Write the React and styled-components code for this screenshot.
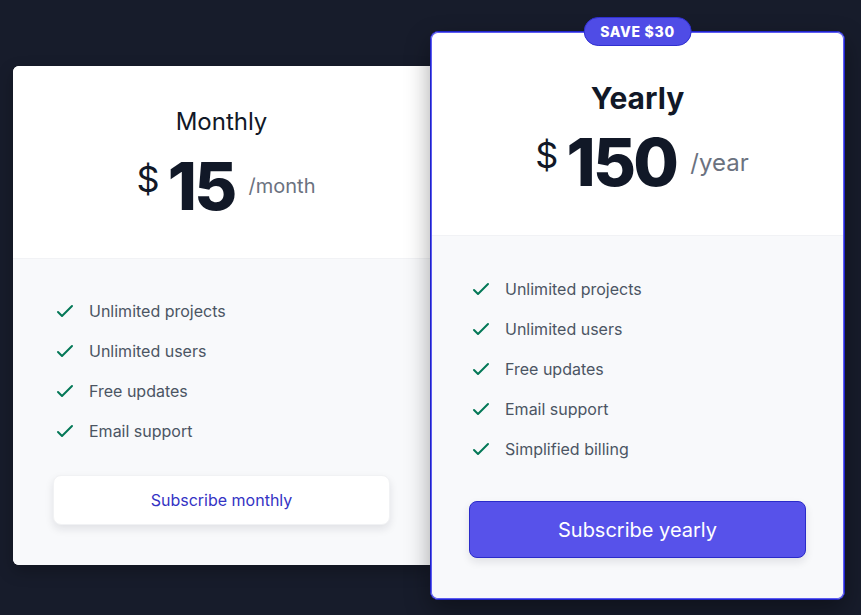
import React from "react";
import styled, { createGlobalStyle } from "styled-components";

const Global = createGlobalStyle`
  html, body { margin: 0; padding: 0; background: #171c2b; }
  body { font-family: Inter, "Noto Sans", sans-serif; -webkit-font-smoothing: antialiased; }
  * { box-sizing: border-box; }
`;

const Page = styled.div`
  width: 861px;
  height: 615px;
  display: flex;
  align-items: center;
  padding: 16px 0 0 13px;
`;

const Card = styled.div`
  position: relative;
  display: flex;
  flex-direction: column;
  width: ${(p) => (p.$featured ? "415px" : "417px")};
  background: #ffffff;
  border-radius: ${(p) => (p.$featured ? "8px" : "6px 0 0 6px")};
  border: ${(p) => (p.$featured ? "1px solid #1f23c8" : "none")};
  box-shadow: ${(p) =>
    p.$featured
      ? "inset 0 0 0 1px #5d5cf0, 0 10px 25px rgba(0,0,0,0.35)"
      : "0 6px 16px rgba(0,0,0,0.25)"};
  z-index: ${(p) => (p.$featured ? 2 : 1)};
`;

const Header = styled.div`
  display: flex;
  flex-direction: column;
  align-items: center;
  background: #ffffff;
  border-radius: inherit;
  border-bottom-left-radius: 0;
  border-bottom-right-radius: 0;
  padding: ${(p) => (p.$featured ? "45px 37px 37px" : "40px 40px 40px")};
  border-bottom: 1px solid #f1f2f5;
  margin: ${(p) => (p.$featured ? "1px 1px 0" : "0")};
`;

const Badge = styled.span`
  position: absolute;
  top: -15px;
  left: 50%;
  transform: translateX(-50%);
  height: 29px;
  padding: 0 16px;
  display: inline-flex;
  align-items: center;
  border-radius: 999px;
  background: #4f4ce6;
  border: 1px solid #2f2fd0;
  color: #ffffff;
  font-size: 14px;
  font-weight: 800;
  letter-spacing: 0.05em;
  text-transform: uppercase;
`;

const Title = styled.h3`
  margin: 0;
  color: #111827;
  font-size: ${(p) => (p.$featured ? "30px" : "24px")};
  line-height: ${(p) => (p.$featured ? "40px" : "32px")};
  font-weight: ${(p) => (p.$featured ? 700 : 400)};
`;

const PriceRow = styled.div`
  margin-top: ${(p) => (p.$featured ? "8px" : "16px")};
  display: flex;
  align-items: center;
  justify-content: center;
  height: ${(p) => (p.$featured ? "72px" : "64px")};
`;

const Amount = styled.span`
  display: flex;
  align-items: flex-start;
  padding: 0 14px 0 9px;
  color: #111827;
  line-height: 1;
`;

const Currency = styled.span`
  font-size: 36px;
  font-weight: 400;
  margin-top: 8px;
  margin-right: 8px;
`;

const Number = styled.span`
  font-size: 66px;
  font-weight: 800;
  letter-spacing: -0.04em;
`;

const Period = styled.span`
  color: #6b7280;
  font-size: ${(p) => (p.$featured ? "24px" : "20px")};
  line-height: 32px;
  font-weight: 400;
  margin-top: ${(p) => (p.$featured ? "2px" : "0")};
`;

const Body = styled.div`
  flex: 1;
  display: flex;
  flex-direction: column;
  background: #f8f9fb;
  border-radius: 0 0 ${(p) => (p.$featured ? "7px 7px" : "0 6px")};
  padding: ${(p) => (p.$featured ? "41px 37px 40px" : "40px 40px 40px")};
  margin: ${(p) => (p.$featured ? "0 1px 1px" : "0")};
`;

const List = styled.ul`
  list-style: none;
  margin: 0;
  padding: 0;
  display: flex;
  flex-direction: column;
  gap: 16px;
`;

const Item = styled.li`
  display: flex;
  align-items: center;
  gap: 12px;
  height: 24px;
  color: #4b5563;
  font-size: 16px;
  line-height: 24px;
`;

const Check = () => (
  <svg width="24" height="24" viewBox="0 0 24 24" fill="none" stroke="#047857" strokeWidth="2" strokeLinecap="round" strokeLinejoin="round">
    <path d="M5 13l4 4L19 7" />
  </svg>
);

const Button = styled.button`
  margin-top: ${(p) => (p.$featured ? "40px" : "32px")};
  width: 100%;
  height: ${(p) => (p.$featured ? "57px" : "50px")};
  border-radius: 8px;
  font-family: inherit;
  cursor: pointer;
  font-size: ${(p) => (p.$featured ? "20px" : "16px")};
  font-weight: 400;
  color: ${(p) => (p.$featured ? "#ffffff" : "#3433c4")};
  background: ${(p) => (p.$featured ? "#5752ea" : "#ffffff")};
  border: ${(p) => (p.$featured ? "1px solid #2a2bc9" : "1px solid #f1f2f4")};
  box-shadow: 0 4px 8px rgba(17, 24, 39, 0.1);
`;

const plans = [
  {
    key: "monthly",
    title: "Monthly",
    price: "15",
    period: "/month",
    features: ["Unlimited projects", "Unlimited users", "Free updates", "Email support"],
    cta: "Subscribe monthly",
  },
  {
    key: "yearly",
    featured: true,
    badge: "Save $30",
    title: "Yearly",
    price: "150",
    period: "/year",
    features: ["Unlimited projects", "Unlimited users", "Free updates", "Email support", "Simplified billing"],
    cta: "Subscribe yearly",
  },
];

export default function App() {
  return (
    <>
      <Global />
      <Page>
        {plans.map((p) => (
          <Card key={p.key} $featured={p.featured}>
            {p.badge && <Badge>{p.badge}</Badge>}
            <Header $featured={p.featured}>
              <Title $featured={p.featured}>{p.title}</Title>
              <PriceRow $featured={p.featured}>
                <Amount>
                  <Currency>$</Currency>
                  <Number>{p.price}</Number>
                </Amount>
                <Period $featured={p.featured}>{p.period}</Period>
              </PriceRow>
            </Header>
            <Body $featured={p.featured}>
              <List>
                {p.features.map((f) => (
                  <Item key={f}>
                    <Check />
                    {f}
                  </Item>
                ))}
              </List>
              <Button $featured={p.featured}>{p.cta}</Button>
            </Body>
          </Card>
        ))}
      </Page>
    </>
  );
}
